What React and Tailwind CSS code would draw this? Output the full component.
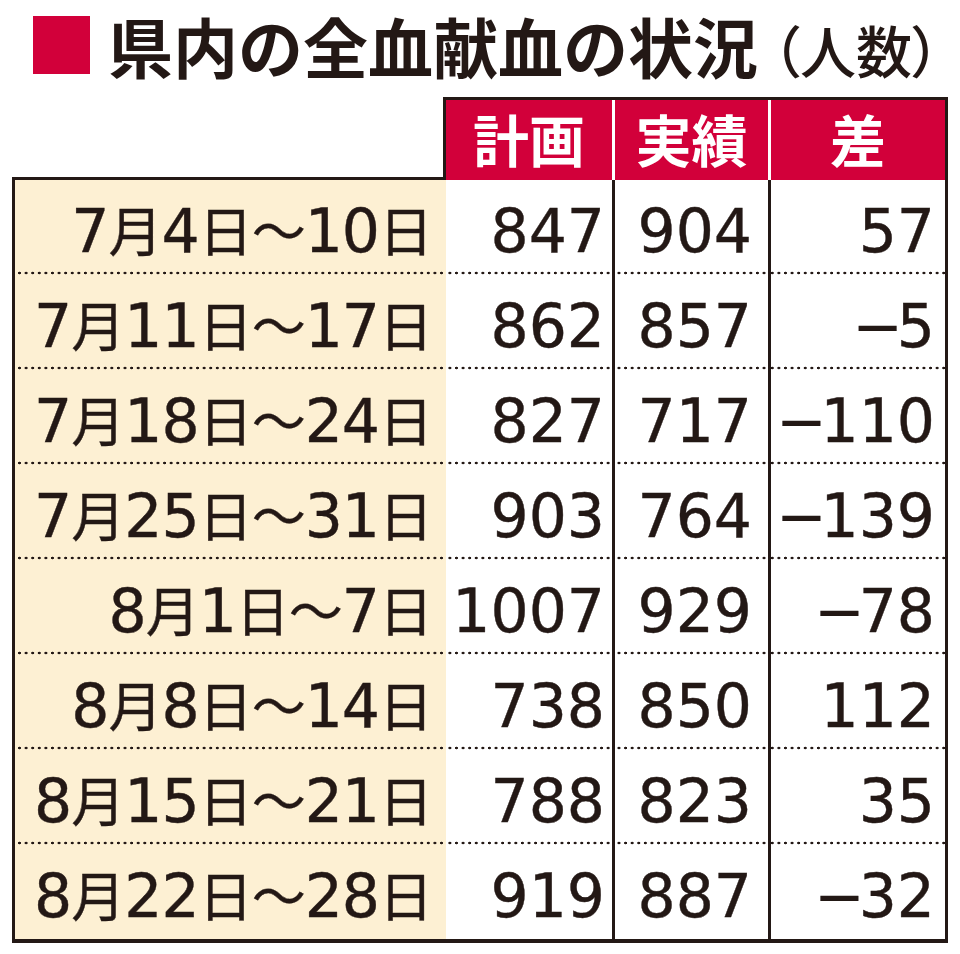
import React from "react";

const rows = [
  ["7月4日～10日", "847", "904", "57"],
  ["7月11日～17日", "862", "857", "−5"],
  ["7月18日～24日", "827", "717", "−110"],
  ["7月25日～31日", "903", "764", "−139"],
  ["8月1日～7日", "1007", "929", "−78"],
  ["8月8日～14日", "738", "850", "112"],
  ["8月15日～21日", "788", "823", "35"],
  ["8月22日～28日", "919", "887", "−32"],
];

function Label({ text }) {
  return (
    <span>
      {[...text].map((ch, i) =>
        /[0-9]/.test(ch) ? (
          <span key={i} className="tracking-[-1px]">{ch}</span>
        ) : (
          <span key={i} className="text-[54px] tracking-[-1px] font-['Noto_Sans_CJK_JP',sans-serif]">
            {ch}
          </span>
        )
      )}
    </span>
  );
}

function Num({ v }) {
  if (v.startsWith("−")) {
    return (
      <span>
        <span className="tracking-[-6px]">−</span>
        {v.slice(1)}
      </span>
    );
  }
  return <span>{v}</span>;
}

function Row({ r, last }) {
  const dots = last
    ? ""
    : " bg-[radial-gradient(circle,#231815_1.2px,transparent_1.6px)] bg-[length:6.6px_4px] bg-repeat-x bg-bottom";
  return (
    <div className={"grid grid-cols-[431px_166px_156px_177px] " + (last ? "h-[94px]" : "h-[95px]")}>
      <div className={"flex items-center justify-end pr-[14px] pt-[7px] bg-[#fdf0d3]" + dots}>
        <Label text={r[0]} />
      </div>
      <div className={"flex items-center justify-end pr-[7px] pt-[7px]" + dots}>
        <Num v={r[1]} />
      </div>
      <div className={"flex items-center justify-end pr-[16px] pt-[7px] border-l-[3px] border-[#231815]" + dots}>
        <Num v={r[2]} />
      </div>
      <div className={"flex items-center justify-end pr-[10px] pt-[7px] border-l-[3px] border-[#231815]" + dots}>
        <Num v={r[3]} />
      </div>
    </div>
  );
}

export default function App() {
  return (
    <div className="w-[960px] h-[954px] bg-white overflow-hidden text-[#231815] font-['Noto_Sans_CJK_JP',sans-serif]">
      {/* Title */}
      <div className="flex items-start h-[97px] pt-[6px]">
        <div className="ml-[33px] mt-[10px] w-[57px] h-[58px] bg-[#d2003a] shrink-0" />
        <h1 className="ml-[18px] flex-1 leading-[1.2]">
          <span className="text-[65px] font-bold">県内の全血献血の状況</span>
          <span className="ml-[14px] text-[56px] font-medium [font-feature-settings:'palt']">（人数）</span>
        </h1>
      </div>

      {/* Table */}
      <div className="ml-[12px] w-[936px]">
        {/* Header */}
        <div className="flex h-[83px]">
          <div className="w-[431px] flex flex-col justify-end">
            <div className="h-[3px] bg-[#231815]" />
          </div>
          <div className="w-[505px] border-t-[3px] border-l-[3px] border-r-[3px] border-[#231815] bg-white grid grid-cols-[166px_153px_174px] gap-x-[3px]">
            <div className="bg-[#d2003a] text-white font-bold text-[56px] leading-none flex items-center justify-center pb-[5px]">計画</div>
            <div className="bg-[#d2003a] text-white font-bold text-[56px] leading-none flex items-center justify-center pb-[5px]">実績</div>
            <div className="bg-[#d2003a] text-white font-bold text-[56px] leading-none flex items-center justify-center pb-[5px]">差</div>
          </div>
        </div>
        {/* Body */}
        <div className="border-l-[3px] border-r-[3px] border-b-[4px] border-[#231815] font-['DejaVu_Sans','Noto_Sans_CJK_JP',sans-serif] text-[60px] leading-none [-webkit-text-stroke:0.4px_#231815]">
          {rows.map((r, i) => (
            <Row key={i} r={r} last={i === rows.length - 1} />
          ))}
        </div>
      </div>
    </div>
  );
}
